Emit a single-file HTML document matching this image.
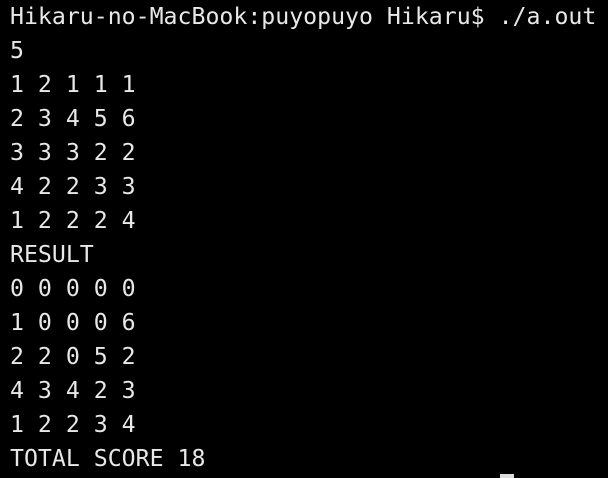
<!DOCTYPE html>
<html><head><style>
html,body{margin:0;padding:0;background:#000;width:608px;height:478px;overflow:hidden}
pre{margin:0;position:absolute;left:10px;top:0px;font-family:"DejaVu Sans Mono","Liberation Mono",monospace;font-size:23.2px;line-height:34px;color:#e8e8e8}
.cur{position:absolute;left:500px;top:474px;width:14px;height:4px;background:#ddd}
</style></head><body>
<pre>Hikaru-no-MacBook:puyopuyo Hikaru$ ./a.out
5
1 2 1 1 1
2 3 4 5 6
3 3 3 2 2
4 2 2 3 3
1 2 2 2 4
RESULT
0 0 0 0 0
1 0 0 0 6
2 2 0 5 2
4 3 4 2 3
1 2 2 3 4
TOTAL SCORE 18</pre>
<div class="cur"></div>
</body></html>
